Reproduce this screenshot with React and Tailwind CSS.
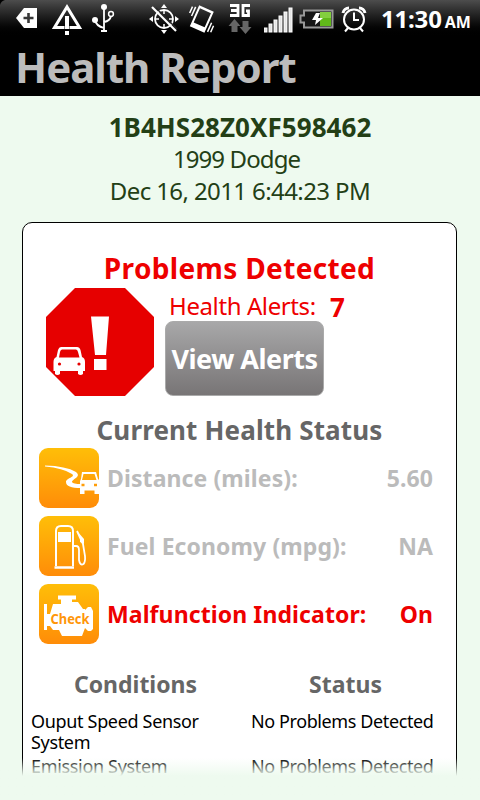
const SignalBars = () => (
  <svg width="30" height="26" viewBox="0 0 30 26" fill="#e4e4e4">
    <rect x="0" y="21" width="3" height="4" />
    <rect x="5" y="17" width="3" height="8" />
    <rect x="10" y="13" width="3" height="12" />
    <rect x="15" y="9" width="3" height="16" />
    <rect x="20" y="5" width="3" height="20" />
    <rect x="25" y="1" width="3" height="24" />
  </svg>
);

const StatusBar = () => (
  <div className="flex h-[38px] bg-linear-to-b from-[#4d4d4d] to-black">
    <svg className="shrink-0" width="374" height="38" viewBox="0 0 374 38" fill="none" stroke="#fff">
      {/* screen corner */}
      <path d="M0 0h5Q1 1 0 5z" fill="#000" stroke="none" />
      {/* back tag */}
      <path d="M16 18L24 8H37V28H24z" fill="#fff" stroke="none" />
      <path d="M28.5 13v10M23.5 18h10" stroke="#383838" strokeWidth="2.6" />
      {/* warning */}
      <path d="M64.500 27.500H54.500L67 7L79.500 27.500H69.500" strokeWidth="3" />
      <path d="M67 16v13M67 31v4" strokeWidth="4" />
      {/* usb */}
      <path d="M104 7v24M104 28q-8-2-9-8M104 22q6-1 7-6" strokeWidth="1.800" />
      <circle cx="104" cy="7" r="3" fill="#fff" stroke="none" />
      <circle cx="95" cy="20" r="3" fill="#fff" stroke="none" />
      <circle cx="111" cy="14" r="2.400" strokeWidth="1.500" />
      <path d="M101 31h6" strokeWidth="2" />
      {/* gps off */}
      <g transform="translate(164 19)">
        <circle r="9" strokeWidth="1.800" />
        <path d="M0-15l3 4h-6zM0 15l3-4h-6zM-15 0l4-3v6zM15 0l-4-3v6z" fill="#fff" stroke="none" />
        <path d="M0-9v4M0 9v-4M-9 0h4M9 0h-4" strokeWidth="1.500" />
        <path d="M-8-11L13 10" stroke="#262626" strokeWidth="1.500" />
        <path d="M-12-12L12 12" strokeWidth="2.200" />
      </g>
      {/* vibrate */}
      <g transform="translate(202 18.500) rotate(24)">
        <path fillRule="evenodd" d="M-8-11h16V12h-16zM-6-8.500v15.500H6V-8.500z" fill="#fff" stroke="none" />
        <path d="M-10.500-8v10M-13.500-7v7M10.500 0v10M13.500 2v7" strokeWidth="1.500" />
      </g>
      {/* data arrows */}
      <path d="M234.500 19l6 7h-3v6h-6v-6h-3zM245.500 34l6-7h-3v-6h-6v6h-3z" fill="#666" stroke="none" />
      {/* 3G */}
      <path d="M230 5.500H238V15.500H230M231 10.500H238M250 5.500H243V15.500H248.500V11H246" strokeWidth="2.800" />
      <g transform="translate(264 7)">
        <SignalBars />
      </g>
      {/* battery */}
      <path d="M304 10.500H332.500V27.500H304V22.500H300.500V15.500H304z" fill="#161616" stroke="#999" strokeWidth="2" />
      <path d="M320 12h11v14h-11z" fill="#61b81a" stroke="none" />
      <path d="M320 12h11v6h-11z" fill="#83cf3e" stroke="none" />
      <path d="M316 13h4l-2 5h5l-8 7 1-5h-4z" fill="#fff" stroke="none" />
      {/* alarm */}
      <circle cx="354" cy="19.500" r="10" strokeWidth="2" />
      <path d="M354 12.500v7.500h5M348 28l-3 3.500M360 28l3 3.500" strokeWidth="2" />
      <path d="M343 13a6 6 0 0 1 6-5M359 8a6 6 0 0 1 6 5" strokeWidth="3" />
    </svg>
    <div className="flex flex-1 items-baseline pl-[7px] font-bold leading-[38px] text-white">
      <span className="text-[24px] tracking-[-0.2px]">11:30</span>
      <span className="ml-[3px] text-[16px]">AM</span>
    </div>
  </div>
);

const StopSign = () => (
  <svg className="shrink-0" width="108" height="108" viewBox="0 0 108 108">
    <path d="M29 0H79L108 29V79L79 108H29L0 79V29z" fill="#e60000" />
    <path d="M45 28.500H63L60 67H49zM48 71H60.500V82H48z" fill="#fff" />
    <path
      fillRule="evenodd"
      fill="#fff"
      d="M15 59H31Q33.500 59 34.500 62L36 69Q39 70 39 74V83H37V86Q34.500 88 32 86V83H14V86Q11.500 88 9 86V83H7.500V74Q7.500 70 10.500 69L12 62Q13 59 15 59zM16 61.500Q14.500 61.500 14 64L13 69.500H33.500L32 64Q31.500 61.500 30 61.500z"
    />
    <circle cx="13.500" cy="76" r="1.600" fill="#e60000" />
    <circle cx="33" cy="76" r="1.600" fill="#e60000" />
  </svg>
);

const IconTile = ({ children }) => (
  <div className="h-[60px] w-[60px] shrink-0 overflow-hidden rounded-[9px] bg-linear-to-b from-[#ffbe08] to-[#ff8c08]">
    <svg width="60" height="60" viewBox="0 0 60 60" fill="none">
      {children}
    </svg>
  </div>
);

const RoadIcon = () => (
  <IconTile>
    <path
      fill="#fff"
      d="M6 17.500Q27 18 37 24C43 29 33 31 33 34Q34 36 42 36V40Q27 40 27 34C27 30 37 29 33 26Q24 20 6 18.500z"
    />
    <path
      fillRule="evenodd"
      fill="#fff"
      d="M43 24H57L59 31L60 32V46H55.500V42.500H45.500V46H41V33L42 31zM44.500 26L43 32H57.500L55.500 26z"
    />
    <path d="M42.500 37h3M55 37h3" stroke="#ff9d08" strokeWidth="2.500" />
  </IconTile>
);

const PumpIcon = () => (
  <IconTile>
    <path d="M17 50V15Q17 10 22 10H29Q34 10 34 15V50" stroke="#fff" strokeWidth="2" />
    <path d="M19 16H32V26H19z" fill="#fff" />
    <path d="M15.500 51.500H35" stroke="#fff" strokeWidth="2.500" />
    <path d="M35 30H37Q40 30 40 34V44Q41 50 44.500 48Q46.500 46 46 40L44 28L38 15" stroke="#fff" strokeWidth="1.800" />
    <path d="M38 15L45 23V28L41 26V21z" fill="#fff" />
  </IconTile>
);

const EngineIcon = () => (
  <IconTile>
    <path
      fill="#fff"
      d="M19 11.500H37V15.500H33V18H39L44 25H46V26L49 23H52L54 27V45L52 47H49L46 44L43 52H23L20 46H14L11 42H8V46H5V20H8V30H11L14 20H22V15.500H19z"
    />
    <text
      x="11.500"
      y="39.500"
      textLength="39"
      lengthAdjust="spacingAndGlyphs"
      fill="#ff9608"
      className="font-['Noto_Sans',sans-serif] text-[15px] font-bold"
    >
      Check
    </text>
  </IconTile>
);

const stats = [
  { icon: RoadIcon, label: 'Distance (miles):', value: '5.60', color: 'text-[#bbbbbb]' },
  { icon: PumpIcon, label: 'Fuel Economy (mpg):', value: 'NA', color: 'text-[#bbbbbb]' },
  { icon: EngineIcon, label: 'Malfunction Indicator:', value: 'On', color: 'text-[#ee0000]' },
];

const conditions = [
  { name: 'Ouput Speed Sensor System', status: 'No Problems Detected' },
  { name: 'Emission System', status: 'No Problems Detected' },
];

const App = () => {
  return (
    <div className="relative flex h-[800px] w-[480px] flex-col overflow-hidden bg-[#eefaef] font-['Noto_Sans',sans-serif]">
      <StatusBar />
      <h1 className="h-[58px] shrink-0 whitespace-nowrap bg-black pl-[15px] text-[42px] font-bold leading-[58px] tracking-[-1px] text-[#bcbcbc]">
        Health Report
      </h1>

      <div className="flex h-[126px] shrink-0 flex-col items-center whitespace-nowrap pt-[15px] leading-[32px] text-[#233f16]">
        <div className="text-[26px] font-bold tracking-[0.05px]">1B4HS28Z0XF598462</div>
        <div className="pr-[7px] text-[24px] leading-[31px] tracking-[-0.9px]">1999 Dodge</div>
        <div className="text-[24px] leading-[33px] tracking-[-0.6px]">Dec 16, 2011 6:44:23 PM</div>
      </div>

      <div className="ml-[22px] h-[600px] w-[435px] shrink-0 whitespace-nowrap rounded-[10px] border-[1.5px] border-black bg-white pt-[27px]">
        <h2 className="text-center text-[28px] font-bold leading-[36px] tracking-[0.35px] text-[#ee0000]">Problems Detected</h2>

        <div className="flex gap-[11px] pl-[23px] pt-[2px]">
          <StopSign />
          <div>
            <div className="flex h-[33px] items-baseline pl-[4px] leading-[34px] text-[#ee0000]">
              <span className="w-[161px] text-[24px] tracking-[-0.4px]">Health Alerts:</span>
              <span className="relative top-[2px] text-[26px] font-bold">7</span>
            </div>
            <button className="h-[75px] w-[159px] rounded-[8px] border border-[#aaaaaa] bg-linear-to-b from-[#a8a8a9] to-[#787576] pt-[2px] text-[27px] font-bold tracking-[-0.5px] text-white">
              View Alerts
            </button>
          </div>
        </div>

        <h2 className="mt-[17px] text-center text-[26px] font-bold leading-[35px] tracking-[0.15px] text-[#666666]">
          Current Health Status
        </h2>

        <div className="flex flex-col gap-[8px] pl-[16px] pr-[23px]">
          {stats.map(({ icon: Icon, label, value, color }) => (
            <div key={label} className={`flex items-center ${color}`}>
              <Icon />
              <span className="ml-[8px] flex-1 text-[23px] font-bold tracking-[0.1px]">{label}</span>
              <span className="text-[23px] font-bold tracking-[0.1px]">{value}</span>
            </div>
          ))}
        </div>

        <div className="mt-[24px] flex h-[43px] text-[23px] font-bold leading-[32px] text-[#666666]">
          <div className="w-[225px] text-center">Conditions</div>
          <div className="w-[195px] text-center">Status</div>
        </div>

        <div className="flex flex-col gap-[3px] pl-[8px] text-[18px] leading-[21px] tracking-[-0.4px] text-black">
          {conditions.map(({ name, status }) => (
            <div key={name} className="flex">
              <div className="w-[220px] whitespace-normal pr-[30px] tracking-[-0.33px]">{name}</div>
              <div>{status}</div>
            </div>
          ))}
        </div>
      </div>

      {/* scroll fade over the end of the list */}
      <div className="absolute inset-x-0 bottom-0 h-[42px] bg-linear-to-b from-[#eefaef]/0 to-[#eefaef] to-[18px]" />
    </div>
  );
};

export default App;
